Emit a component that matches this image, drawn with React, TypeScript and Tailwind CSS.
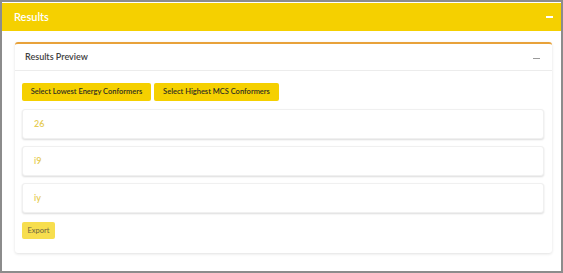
import React from 'react';

const rows = ['26', 'i9', 'iy'];

const App: React.FC = () => {
  return (
    <div className="w-[563px] h-[273px] bg-white border-2 border-[#8c8c8c] flex flex-col font-['Lato','Liberation_Sans',sans-serif] overflow-hidden">
      {/* Panel header */}
      <div className="h-[28px] mt-px bg-[#f5d000] flex items-center justify-between pl-[12px] pr-[8px]">
        <span className="text-white text-[11px] font-semibold">Results</span>
        <span className="w-[7px] h-[2px] bg-white" />
      </div>

      <div className="pt-[11px] pl-[13px] pr-[9px]">
        <div className="bg-white border-t-2 border-[#e8a23a] rounded-[3px] shadow-[0_1px_3px_rgba(0,0,0,0.12)]">
          {/* Card header */}
          <div className="h-[27px] flex items-center justify-between pl-[10px] pr-[12px] border-b border-[#ececec]">
            <span className="text-[#3f3f3f] text-[9px] font-semibold">Results Preview</span>
            <span className="w-[7px] h-px bg-[#9a9a9a] mt-[3px]" />
          </div>

          <div className="pl-[7px] pr-[8px] pt-[12px] pb-[14px] flex flex-col">
            <div className="flex gap-[3px]">
              <button className="h-[18px] w-[129px] bg-[#f5d000] rounded-[2px] text-[7.5px] font-semibold text-[#2e2e22]">
                Select Lowest Energy Conformers
              </button>
              <button className="h-[18px] w-[125px] bg-[#f5d000] rounded-[2px] text-[7.5px] font-semibold text-[#2e2e22]">
                Select Highest MCS Conformers
              </button>
            </div>

            <div className="mt-[8px] flex flex-col gap-[7px]">
              {rows.map((r) => (
                <div
                  key={r}
                  className="h-[30px] flex items-center pl-[11px] bg-white rounded-[3px] border border-[#f0f0f0] shadow-[0_1px_2px_rgba(0,0,0,0.14)]"
                >
                  <span className="text-[#e6cc55] text-[9px] font-semibold">{r}</span>
                </div>
              ))}
            </div>

            <div className="mt-[9px] flex">
              <button className="h-[17px] w-[33px] bg-[#f7de4e] rounded-[2px] text-[7.5px] text-[#6b6340] leading-none">
                Export
              </button>
            </div>
          </div>
        </div>
      </div>
    </div>
  );
};

export default App;
